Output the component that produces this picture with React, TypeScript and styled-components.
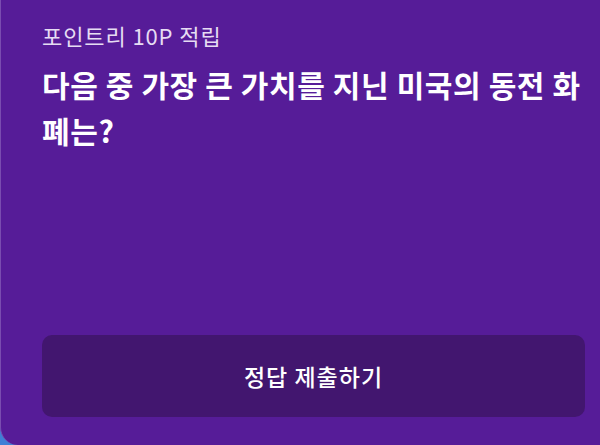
import React from "react";
import styled, { createGlobalStyle } from "styled-components";

const Global = createGlobalStyle`
  html, body { margin: 0; padding: 0; }
  body {
    width: 600px;
    height: 445px;
    overflow: hidden;
    background: #3f7fd6;
    font-family: "Noto Sans CJK KR", "Noto Sans", sans-serif;
  }
`;

const Card = styled.div`
  box-sizing: border-box;
  width: 600px;
  height: 445px;
  background: #561c98;
  border-bottom-left-radius: 18px;
  border-left: 1px solid #7a4cb0;
  padding: 20px 15px 28px 41px;
  display: flex;
  flex-direction: column;
`;

const Label = styled.div`
  color: #e6dcf3;
  font-size: 22px;
  font-weight: 400;
  line-height: 30px;
  letter-spacing: 0.9px;
`;

const Question = styled.h1`
  margin: 11px 0 0;
  color: #ffffff;
  font-size: 30px;
  font-weight: 700;
  line-height: 46px;
  letter-spacing: 0.6px;
  word-break: normal;
`;

const Spacer = styled.div`
  flex: 1;
`;

const SubmitButton = styled.button`
  height: 82px;
  width: 100%;
  border: none;
  border-radius: 10px;
  background: #42166f;
  color: #ffffff;
  font-family: "Noto Sans CJK KR", "Noto Sans", sans-serif;
  font-size: 23px;
  font-weight: 500;
  letter-spacing: 1px;
  cursor: pointer;
`;

export default function App() {
  return (
    <>
      <Global />
      <Card>
        <Label>포인트리 10P 적립</Label>
        <Question>다음 중 가장 큰 가치를 지닌 미국의 동전 화폐는?</Question>
        <Spacer />
        <SubmitButton>정답 제출하기</SubmitButton>
      </Card>
    </>
  );
}
